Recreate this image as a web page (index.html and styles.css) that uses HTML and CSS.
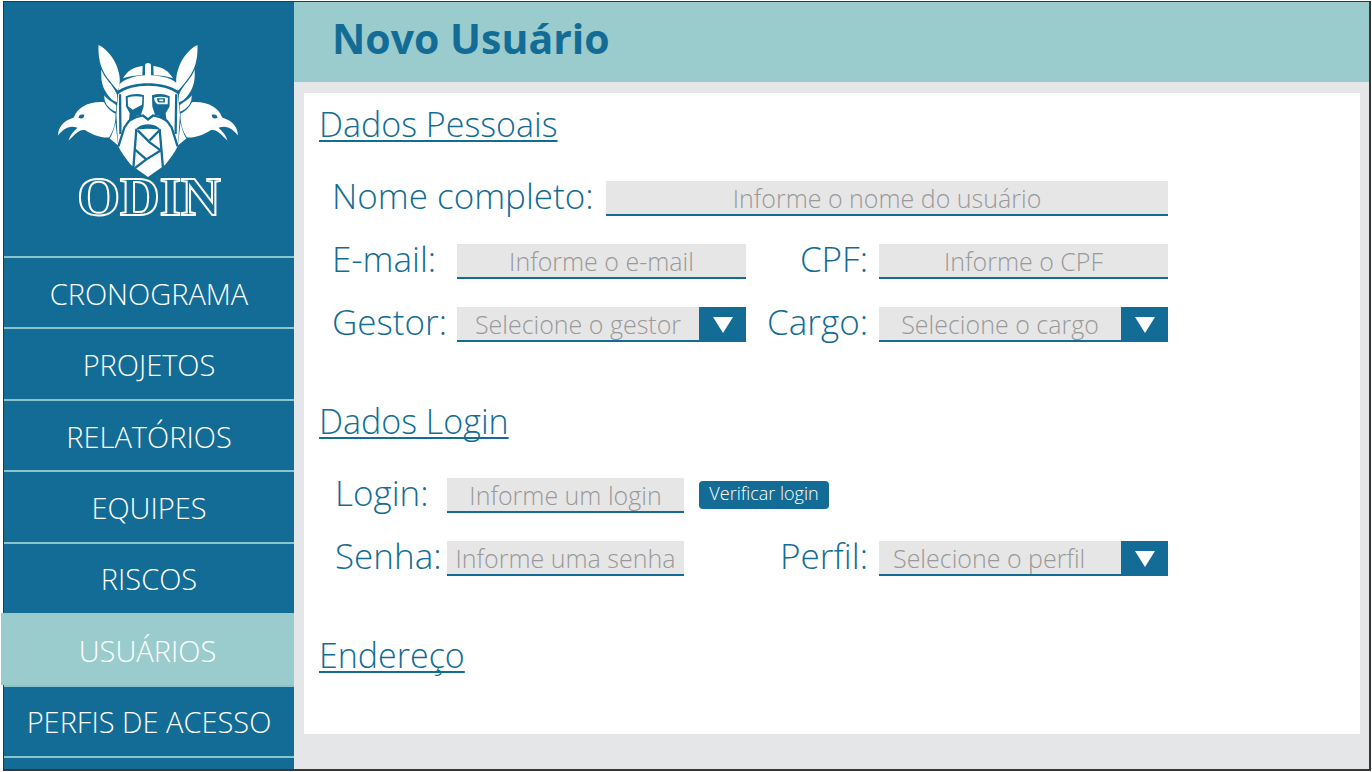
FILE: index.html
```html
<!DOCTYPE html>
<html lang="pt-BR">
<head>
<meta charset="utf-8">
<title>Odin - Novo Usuário</title>
<link rel="stylesheet" href="styles.css">
</head>
<body>
<div class="app">
  <aside class="sidebar">
    <div class="brand">
      <svg class="brand-mark" viewBox="0 0 600 430" aria-hidden="true">
        <defs>
          <g id="side">
            <path d="M148 30C168 38 196 68 206 102C212 122 216 138 207 168C197 158 190 148 181 137C158 108 147 80 148 30Z"/>
            <path d="M157 104C164 130 190 146 204 180L204 202C190 200 176 182 168 168C158 150 155 130 157 104Z"/>
            <path d="M166 181C174 195 194 202 202 212L201 230C190 228 178 217 172 208C166 198 165 190 166 181Z"/>
            <path d="M27 302C26 278 42 258 74 248C84 220 115 199 165 202C172 216 184 230 199 236C201 264 192 290 180 308C152 309 130 300 110 287C90 280 76 302 58 317C62 304 72 290 85 279C60 270 42 282 27 302Z"/>
            <path d="M199 262L207 332L182 311C190 298 196 280 199 262Z"/>
            <path d="M222 130C234 108 255 95 281 93L280 120C258 121 240 124 222 130Z"/>
            <path class="ink" d="M88 249C88 240 96 237 105 240C106 249 98 255 88 249Z"/>
          </g>
        </defs>
        <use href="#side"/>
        <use href="#side" transform="translate(594 0) scale(-1 1)"/>
        <path d="M288 92Q288 84 297 84Q306 84 306 92V121C345 123 370 132 384 145L386 167C340 138 254 138 209 166L211 149C224 132 260 122 288 121Z"/>
        <path d="M207 178C250 144 344 144 387 178L393 240L387 333C378 352 362 374 348 391L297 427L246 391C232 374 216 352 207 333L202 240Z"/>
        <path class="ink" d="M230 184Q258 173 285 181L284 215L276 240L262 243L239 263L242 235L231 215Z"/>
        <path d="M236 188Q258 182 280 186L279 210L262 219L251 225L237 214Z"/>
        <path class="ink" d="M309 181Q338 173 362 184V215L350 235L354 263L331 243L318 240L310 215Z"/>
        <path d="M315 189Q335 183 357 189L356 208H326Q317 205 315 189Z"/>
        <path class="ink" d="M324 190H348V203H330Q325 202 324 190Z"/>
        <path d="M331 194H343V199H331Z"/>
        <path class="line" d="M213 178L214 298M382 178L380 298"/>
        <path class="line" d="M208 335L226 278L240 258L263 246L282 242L297 254L312 242L331 246L354 258L368 278L386 335"/>
        <path class="ink" d="M258 287Q270 268 297 268Q324 268 336 287L329 284Q297 280 265 284Z"/>
        <path class="line" d="M253 400L262 282M342 400L332 282"/>
        <path class="line" d="M266 287L302 323L335 347M331 287L302 317M335 347L292 374L258 400M258 345L292 374"/>
      </svg>
      <div class="brand-name">ODIN</div>
    </div>
    <nav class="menu">
      <a class="menu-item" href="#">CRONOGRAMA</a>
      <a class="menu-item" href="#">PROJETOS</a>
      <a class="menu-item" href="#">RELATÓRIOS</a>
      <a class="menu-item" href="#">EQUIPES</a>
      <a class="menu-item" href="#">RISCOS</a>
      <a class="menu-item active" href="#" aria-current="page">USUÁRIOS</a>
      <a class="menu-item" href="#">PERFIS DE ACESSO</a>
    </nav>
  </aside>
  <main class="main">
    <header class="topbar"><h1 class="title">Novo Usuário</h1></header>
    <form class="panel">
      <h2 class="section">Dados Pessoais</h2>
      <div class="fields">
        <div class="name-row">
          <label for="nome">Nome completo:</label>
          <input class="control" id="nome" type="text" placeholder="Informe o nome do usuário">
        </div>
        <div class="personal">
          <label for="email">E-mail:</label>
          <input class="control" id="email" type="email" placeholder="Informe o e-mail">
          <label class="end" for="cpf">CPF:</label>
          <input class="control" id="cpf" type="text" placeholder="Informe o CPF">
          <label for="gestor">Gestor:</label>
          <div class="picker">
            <select class="control" id="gestor"><option>Selecione o gestor</option></select>
            <span class="arrow"><svg viewBox="0 0 20 16" aria-hidden="true"><path d="M0 0H20L10 16Z"/></svg></span>
          </div>
          <label class="end" for="cargo">Cargo:</label>
          <div class="picker">
            <select class="control" id="cargo"><option>Selecione o cargo</option></select>
            <span class="arrow"><svg viewBox="0 0 20 16" aria-hidden="true"><path d="M0 0H20L10 16Z"/></svg></span>
          </div>
        </div>
      </div>
      <h2 class="section">Dados Login</h2>
      <div class="fields access">
        <label class="start" for="login">Login:</label>
        <input class="control" id="login" type="text" placeholder="Informe um login">
        <button class="check" type="button">Verificar login</button>
        <label class="start" for="senha">Senha:</label>
        <input class="control" id="senha" type="password" placeholder="Informe uma senha">
        <label class="end" for="perfil">Perfil:</label>
        <div class="picker leading">
          <select class="control" id="perfil"><option>Selecione o perfil</option></select>
          <span class="arrow"><svg viewBox="0 0 20 16" aria-hidden="true"><path d="M0 0H20L10 16Z"/></svg></span>
        </div>
      </div>
      <h2 class="section">Endereço</h2>
    </form>
  </main>
</div>
</body>
</html>
```
FILE: styles.css
```css
:root {
  --blue: #136c96;
  --teal: #9acccd;
  --rule: #8bc5cb;
  --gray: #e4e6e8;
  --field: #e6e6e6;
  --frame: #343638;
}

* { box-sizing: border-box; }

body {
  margin: 0;
  padding: 1px 1px 1px 3px;
  min-height: 100vh;
  display: flex;
  background: #fff;
  font-family: "Open Sans", "Noto Sans", sans-serif;
  font-weight: 300;
  color: var(--blue);
}

.app {
  flex: 1;
  display: flex;
  border: 1px solid var(--frame);
  border-right-width: 2px;
  border-bottom-width: 2px;
}

/* Sidebar */
.sidebar {
  width: 290px;
  flex: none;
  display: flex;
  flex-direction: column;
  padding-bottom: 11px;
  background: var(--blue);
}

.brand {
  height: 254px;
  padding-top: 33px;
  display: flex;
  flex-direction: column;
  align-items: center;
}

.brand-mark { width: 200px; height: 143px; fill: #fff; }
.ink { fill: var(--blue); }
.line { fill: none; stroke: var(--blue); stroke-width: 7; }

.brand-name {
  font: 700 55px/38px "Liberation Serif", serif;
  color: var(--blue);
  -webkit-text-stroke: 2px #fff;
}

.menu {
  flex: 1;
  display: grid;
  grid-auto-rows: 1fr;
  border-bottom: 2px solid var(--rule);
}

.menu-item {
  display: flex;
  align-items: center;
  justify-content: center;
  padding-top: 2px;
  border-top: 2px solid var(--rule);
  color: #fff;
  font-size: 29px;
  line-height: 36px;
  text-decoration: none;
}

.menu-item.active {
  margin-left: -3px;
  background: var(--teal);
  border-color: var(--teal);
}

/* Main area */
.main {
  flex: 1;
  display: flex;
  flex-direction: column;
  background: var(--gray);
}

.topbar {
  height: 80px;
  padding: 10px 38px;
  background: var(--teal);
}

.title {
  margin: 0;
  font-size: 41px;
  line-height: 52px;
  font-weight: 700;
}

.panel {
  flex: 1;
  margin: 11px 9px 35px 10px;
  padding: 10px 15px;
  background: #fff;
}

.section {
  margin: 0;
  font-size: 34px;
  line-height: 42px;
  font-weight: 300;
  text-decoration: underline 2px;
  text-decoration-skip-ink: none;
  text-underline-offset: 3px;
}

.fields {
  max-width: 849px;
  padding: 36px 0 58px 13px;
}

label {
  font-size: 35px;
  line-height: 30px;
  white-space: nowrap;
}

.end { padding-right: 11px; text-align: right; }

.start { grid-column: 1; padding-left: 3px; }

.control {
  width: 100%;
  min-width: 0;
  height: 35px;
  margin: 0;
  padding: 0;
  border: 0;
  border-bottom: 2px solid var(--blue);
  border-radius: 0;
  background: var(--field);
  color: #999;
  font: inherit;
  font-size: 25px;
  text-align: center;
  appearance: none;
}

.control::placeholder { color: #999; opacity: 1; }

.name-row {
  display: grid;
  grid-template-columns: 274px 1fr;
  margin-bottom: 28px;
}

.personal {
  display: grid;
  grid-template-columns: 125px 1fr 133px 1fr;
  row-gap: 28px;
}

.access {
  display: grid;
  grid-template-columns: 115px 237px 1fr 289px;
  row-gap: 28px;
}

.picker { position: relative; }

.picker .control {
  padding-right: 47px;
  text-align-last: center;
}

.picker.leading .control {
  padding-left: 14px;
  text-align-last: left;
}

.arrow {
  position: absolute;
  top: 0;
  right: 0;
  width: 47px;
  height: 35px;
  display: grid;
  place-items: center;
  background: var(--blue);
  pointer-events: none;
}

.arrow svg { width: 20px; height: 16px; fill: #fff; }

.check {
  justify-self: start;
  width: 130px;
  height: 28px;
  margin: 3px 0 0 15px;
  padding: 0 0 4px;
  border: 0;
  border-radius: 4px;
  background: var(--blue);
  color: #fff;
  font: inherit;
  font-size: 18px;
  line-height: 24px;
}
```
